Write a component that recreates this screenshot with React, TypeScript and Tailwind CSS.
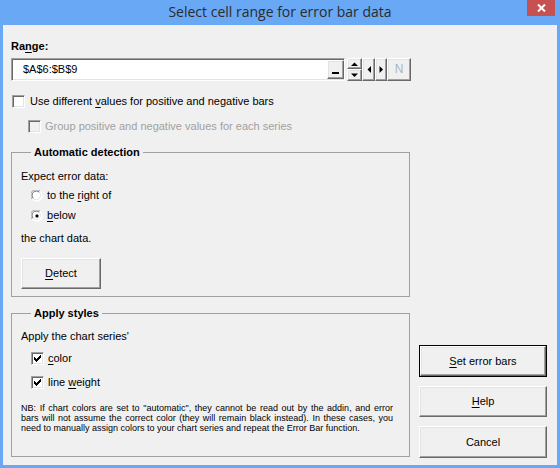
import React from 'react';

const ui = "font-['Liberation_Sans',Arial,sans-serif] text-[11px] leading-[13px] text-black";

const raised =
  'bg-[#f0f0f0] border border-t-white border-l-white border-b-[#696969] border-r-[#696969] shadow-[inset_-1px_-1px_0_#a0a0a0,inset_1px_1px_0_#e3e3e3]';

const CheckBox: React.FC<{ checked?: boolean; disabled?: boolean }> = ({ checked, disabled }) => (
  <span
    className={`w-[13px] h-[13px] shrink-0 flex items-center justify-center border border-t-[#a0a0a0] border-l-[#a0a0a0] border-b-white border-r-white shadow-[inset_1px_1px_0_#696969,inset_-1px_-1px_0_#e3e3e3] ${
      disabled ? 'bg-[#f0f0f0]' : 'bg-white'
    }`}
  >
    {checked && (
      <svg width="7" height="7" viewBox="0 0 7 7">
        <path d="M0 2h1v1h1v1h1V3h1V2h1V1h1V0h1v3H6v1H5v1H4v1H3v1H2V6H1V5H0z" fill="#000" />
      </svg>
    )}
  </span>
);

const Radio: React.FC<{ checked?: boolean }> = ({ checked }) => (
  <svg width="12" height="12" viewBox="0 0 12 12" className="shrink-0">
    <circle cx="6" cy="6" r="5.5" fill="#fff" />
    <path d="M1.2 9.2A5.5 5.5 0 0 1 9.2 1.2" fill="none" stroke="#a0a0a0" strokeWidth="1" />
    <path d="M9.2 1.2A5.5 5.5 0 0 1 1.2 9.2" fill="none" stroke="#ffffff" strokeWidth="1" />
    <path d="M2.3 8.3A4.2 4.2 0 0 1 8.3 2.3" fill="none" stroke="#696969" strokeWidth="1" />
    <path d="M8.3 2.3A4.2 4.2 0 0 1 2.3 8.3" fill="none" stroke="#e3e3e3" strokeWidth="1" />
    {checked && <rect x="4.5" y="4.5" width="3" height="3" rx="1" fill="#000" />}
  </svg>
);

const Tri: React.FC<{ dir: 'up' | 'down' | 'left' | 'right' }> = ({ dir }) => {
  const d = {
    up: 'M0 4L3.5 0.5L7 4Z',
    down: 'M0 0.5L3.5 4L7 0.5Z',
    left: 'M4 0L0.5 3.5L4 7Z',
    right: 'M0.5 0L4 3.5L0.5 7Z',
  }[dir];
  const vertical = dir === 'up' || dir === 'down';
  return (
    <svg width={vertical ? 7 : 4} height={vertical ? 4 : 7} viewBox={vertical ? '0 0 7 4' : '0 0 4 7'}>
      <path d={d} fill="#000" />
    </svg>
  );
};

const Group: React.FC<{ title: string; className?: string; children: React.ReactNode }> = ({
  title,
  className,
  children,
}) => (
  <fieldset className={`border border-[#a0a0a0] ${className ?? ''}`}>
    <legend className="ml-[10px] px-[3px] font-bold">{title}</legend>
    {children}
  </fieldset>
);

export default function App() {
  return (
    <div className={`w-[560px] h-[468px] bg-[#69a8f5] flex flex-col ${ui}`}>
      {/* title bar */}
      <div className="relative h-[25px] shrink-0 flex items-center justify-center">
        <span className="font-['Open_Sans',sans-serif] text-[14px] leading-[20px] text-[#2b2b2b] -mt-[1px]">
          Select cell range for error bar data
        </span>
        <div className="absolute right-[5px] top-0 w-[28px] h-[16px] bg-[#c75050] flex items-center justify-center">
          <svg width="9" height="8" viewBox="0 0 9 8">
            <path d="M1 0.5L8 7.5M8 0.5L1 7.5" stroke="#fff" strokeWidth="2" />
          </svg>
        </div>
      </div>

      {/* body */}
      <div className="flex-1 mx-[3px] mb-[3px] bg-[#f0f0f0] px-[8px] pt-[15px] flex flex-col">
        <div className="font-bold">
          Ra<u className="underline-offset-2">n</u>ge:
        </div>

        {/* range input row */}
        <div className="mt-[5px] flex h-[23px]">
          <div className="w-[334px] flex bg-white border border-t-[#a0a0a0] border-l-[#a0a0a0] border-b-white border-r-white shadow-[inset_1px_1px_0_#696969,inset_-1px_-1px_0_#e3e3e3]">
            <div className="flex-1 pl-[11px] flex items-center">$A$6:$B$9</div>
            <div className={`w-[17px] h-[19px] mt-[1px] flex items-end justify-center pb-[4px] ${raised}`}>
              <span className="w-[7px] h-[2px] bg-black" />
            </div>
          </div>
          <div className="ml-[2px] w-[15px] flex flex-col">
            <div className={`h-[11px] flex items-center justify-center ${raised}`}>
              <Tri dir="up" />
            </div>
            <div className={`flex-1 flex items-center justify-center ${raised}`}>
              <Tri dir="down" />
            </div>
          </div>
          <div className={`w-[13px] flex items-center justify-center ${raised}`}>
            <Tri dir="left" />
          </div>
          <div className={`w-[12px] flex items-center justify-center ${raised}`}>
            <Tri dir="right" />
          </div>
          <div className={`w-[24px] flex items-center justify-center text-[#a9b4c4] text-[12px] ${raised}`}>N</div>
        </div>

        {/* checkboxes */}
        <label className="mt-[14px] ml-[1px] flex items-center gap-[5px]">
          <CheckBox />
          <span>
            Use different <u className="underline-offset-2">v</u>alues for positive and negative bars
          </span>
        </label>
        <label className="mt-[12px] ml-[17px] flex items-center gap-[4px] text-[#a0a0a0]">
          <CheckBox disabled />
          <span>Group positive and negative values for each series</span>
        </label>

        {/* groups + buttons */}
        <div className="mt-[13px] flex gap-[9px]">
          <div className="w-[399px] shrink-0 flex flex-col">
            <Group title="Automatic detection" className="pl-[9px] pb-[7px] pt-[11px]">
              <div>Expect error data:</div>
              <label className="mt-[6px] ml-[10px] flex items-center gap-[4px]">
                <Radio />
                <span>
                  to the <u className="underline-offset-2">r</u>ight of
                </span>
              </label>
              <label className="mt-[7px] ml-[10px] flex items-center gap-[4px]">
                <Radio checked />
                <span>
                  <u className="underline-offset-2">b</u>elow
                </span>
              </label>
              <div className="mt-[10px]">the chart data.</div>
              <button className={`mt-[13px] w-[80px] h-[31px] flex items-center justify-center ${raised}`}>
                <span>
                  <u className="underline-offset-2">D</u>etect
                </span>
              </button>
            </Group>

            <Group title="Apply styles" className="mt-[10px] pl-[9px] pb-[23px] pt-[10px]">
              <div>Apply the chart series'</div>
              <label className="mt-[9px] ml-[10px] flex items-center gap-[4px]">
                <CheckBox checked />
                <span>
                  <u className="underline-offset-2">c</u>olor
                </span>
              </label>
              <label className="mt-[11px] ml-[10px] flex items-center gap-[4px]">
                <CheckBox checked />
                <span>
                  line <u className="underline-offset-2">w</u>eight
                </span>
              </label>
              <div className="mt-[14px] w-[372px] text-[9px] leading-[10px]">
                <div className="text-justify [text-align-last:justify]">
                  NB: If chart colors are set to "automatic", they cannot be read out by the addin, and error
                </div>
                <div className="text-justify [text-align-last:justify]">
                  bars will not assume the correct color (they will remain black instead). In these cases, you
                </div>
                <div>need to manually assign colors to your chart series and repeat the Error Bar function.</div>
              </div>
            </Group>
          </div>

          <div className="w-[128px] shrink-0 flex flex-col justify-end gap-[9px] mb-[-1px]">
            <button className="w-[128px] h-[32px] border border-black p-0 bg-[#f0f0f0]">
              <div className={`w-full h-full flex items-center justify-center ${raised}`}>
                <span>
                  <u className="underline-offset-2">S</u>et error bars
                </span>
              </div>
            </button>
            <button className={`w-[128px] h-[31px] flex items-center justify-center ${raised}`}>
              <span>
                <u className="underline-offset-2">H</u>elp
              </span>
            </button>
            <button className={`w-[128px] h-[32px] flex items-center justify-center ${raised}`}>Cancel</button>
          </div>
        </div>
      </div>
    </div>
  );
}
